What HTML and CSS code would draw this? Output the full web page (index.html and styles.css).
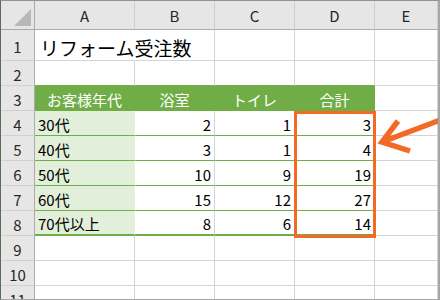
FILE: index.html
```html
<!DOCTYPE html>
<html lang="ja">
<head>
<meta charset="utf-8">
<link rel="stylesheet" href="styles.css">
</head>
<body>
<div class="frame">
  <div class="sheet">
    <div class="hd corner"><span class="tri"></span></div>
    <div class="hd col">A</div>
    <div class="hd col">B</div>
    <div class="hd col">C</div>
    <div class="hd col">D</div>
    <div class="hd col">E</div>

    <div class="hd rn">1</div>
    <div class="c title">リフォーム受注数</div>
    <div class="c"></div><div class="c"></div><div class="c"></div><div class="c"></div>

    <div class="hd rn">2</div>
    <div class="c gb"></div><div class="c gb"></div><div class="c gb"></div><div class="c gb"></div><div class="c"></div>

    <div class="hd rn">3</div>
    <div class="c th">お客様年代</div>
    <div class="c th">浴室</div>
    <div class="c th">トイレ</div>
    <div class="c th">合計</div>
    <div class="c"></div>

    <div class="hd rn">4</div>
    <div class="c ta">30代</div><div class="c tn">2</div><div class="c tn">1</div><div class="c tn">3</div><div class="c"></div>

    <div class="hd rn">5</div>
    <div class="c ta">40代</div><div class="c tn">3</div><div class="c tn">1</div><div class="c tn">4</div><div class="c"></div>

    <div class="hd rn">6</div>
    <div class="c ta">50代</div><div class="c tn">10</div><div class="c tn">9</div><div class="c tn">19</div><div class="c"></div>

    <div class="hd rn">7</div>
    <div class="c ta">60代</div><div class="c tn">15</div><div class="c tn">12</div><div class="c tn">27</div><div class="c"></div>

    <div class="hd rn">8</div>
    <div class="c ta last">70代以上</div><div class="c tn last">8</div><div class="c tn last">6</div><div class="c tn last">14</div><div class="c"></div>

    <div class="hd rn">9</div>
    <div class="c"></div><div class="c"></div><div class="c"></div><div class="c"></div><div class="c"></div>

    <div class="hd rn">10</div>
    <div class="c"></div><div class="c"></div><div class="c"></div><div class="c"></div><div class="c"></div>

    <div class="hd rn">11</div>
    <div class="c"></div><div class="c"></div><div class="c"></div><div class="c"></div><div class="c"></div>
  </div>
  <div class="highlight"></div>
  <svg class="arrow" width="70" height="50" viewBox="0 0 70 50">
    <path d="M27 10 L11 31 L39 40 M11 31 L72 8" fill="none" stroke="#f26a24" stroke-width="5.5" stroke-linejoin="miter"/>
  </svg>
</div>
</body>
</html>
```
FILE: styles.css
```css
* { box-sizing: border-box; }
html, body { margin: 0; padding: 0; background: #ffffff; }
body { font-family: "Noto Sans CJK JP", sans-serif; color: #000; }

.frame {
  position: relative;
  width: 440px;
  height: 300px;
  overflow: hidden;
  border-left: 1px solid #5d6b5f;
  border-top: 1px solid #8f958f;
  border-right: 2px solid #a6a6a6;
  border-bottom: 1px solid #a6a6a6;
}

.sheet {
  display: grid;
  grid-template-columns: 34px 100px 80px 80px 80px 1fr;
  grid-template-rows: 29px 31px repeat(10, 25px);
}

.hd {
  background: #e6e6e6;
  color: #262626;
  font-size: 15px;
  display: flex;
  align-items: center;
  justify-content: center;
  border-right: 1px solid #d0d0d0;
  border-bottom: 1px solid #d0d0d0;
}
.hd.col { border-bottom-color: #ababab; padding-top: 1px; }
.hd.rn { border-right-color: #ababab; padding-top: 2px; }
.hd.corner {
  position: relative;
  border-right-color: #ababab;
  border-bottom-color: #ababab;
}
.tri {
  position: absolute;
  right: 3px;
  bottom: 3px;
  width: 0;
  height: 0;
  border-left: 17px solid transparent;
  border-bottom: 17px solid #b8b8b8;
}

.c {
  border-right: 1px solid #d4d4d4;
  border-bottom: 1px solid #d4d4d4;
  font-size: 15px;
  display: flex;
  align-items: center;
  padding: 2px 3px 0;
  white-space: nowrap;
  overflow: visible;
}
.c.title { font-size: 19px; padding-left: 5px; padding-top: 4px; border-right-color: #ffffff; }
.c.gb { border-bottom-color: #70ad47; }

.c.th {
  background: #70ad47;
  color: #ffffff;
  justify-content: center;
  border-right-color: #70ad47;
  border-bottom-color: #70ad47;
}
.c.ta {
  background: #e2efda;
  border-right-color: #e2efda;
  border-bottom-color: #70ad47;
}
.c.tn {
  justify-content: flex-end;
  border-bottom-color: #70ad47;
}
.c.last { border-bottom: 2px solid #70ad47; }

.highlight {
  position: absolute;
  left: 293px;
  top: 110px;
  width: 82px;
  height: 127px;
  border: 3px solid #f26a24;
}

.arrow {
  position: absolute;
  left: 370px;
  top: 110px;
}
```
